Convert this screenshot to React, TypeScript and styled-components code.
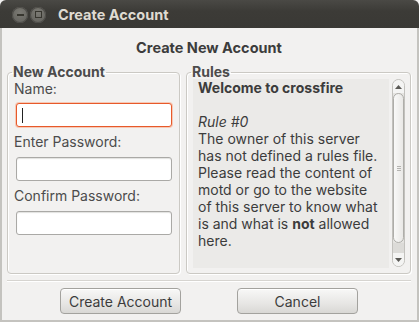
import React from 'react';
import styled, { createGlobalStyle } from 'styled-components';

const FONT = `Inter, 'Open Sans', sans-serif`;

const GlobalStyle = createGlobalStyle`
  html, body {
    margin: 0;
    padding: 0;
    background: #f2f1f0;
  }
  body {
    font-family: ${FONT};
  }
`;

const Window = styled.div`
  width: 419px;
  height: 322px;
  display: flex;
  flex-direction: column;
  box-sizing: border-box;
  background: #f2f1f0;
  overflow: hidden;
`;

const TitleBar = styled.div`
  height: 28px;
  flex-shrink: 0;
  display: flex;
  align-items: center;
  padding-left: 12px;
  gap: 2px;
  background: linear-gradient(#4a4945, #3c3b37 40%, #3a3935);
  border-radius: 6px 6px 0 0;
`;

const TitleButton = styled.div`
  width: 16px;
  height: 16px;
  border-radius: 50%;
  background: radial-gradient(circle at 50% 35%, #7b7a74, #5e5d58);
  box-shadow: inset 0 0 0 1px #4d4c48;
  display: flex;
  align-items: center;
  justify-content: center;
  margin-top: 1px;
`;

const MinusGlyph = styled.div`
  width: 7px;
  height: 2px;
  background: #37362f;
`;

const BoxGlyph = styled.div`
  width: 5px;
  height: 5px;
  border: 1.5px solid #37362f;
`;

const TitleText = styled.div`
  margin-left: 10px;
  color: #dfdbd2;
  font-weight: bold;
  font-size: 14.5px;
`;

const Body = styled.div`
  flex: 1;
  display: flex;
  flex-direction: column;
  border-left: 2px solid #c4c3bf;
  border-right: 2px solid #c4c3bf;
  border-bottom: 2px solid #c4c3bf;
  padding: 0 6px 0 5px;
`;

const Heading = styled.div`
  text-align: center;
  font-weight: bold;
  font-size: 14.5px;
  color: #3c3c3c;
  height: 19px;
  margin-top: 10px;
  line-height: 19px;
`;

const Panels = styled.div`
  display: flex;
  gap: 6px;
  margin-top: 7px;
`;

const Frame = styled.fieldset<{ $width: number }>`
  width: ${p => p.$width}px;
  height: 210px;
  box-sizing: border-box;
  margin: 0;
  border: 1px solid #cbc9c4;
  border-radius: 4px;
  box-shadow: inset 1px 1px 0 #ffffff, 1px 1px 0 #ffffff;
  padding: 0;
`;

const Legend = styled.legend`
  font-weight: bold;
  font-size: 14px;
  color: #4c4c4c;
  padding: 0 1px;
  margin-left: 4px;
  line-height: 16px;
`;

const FormColumn = styled.div`
  display: flex;
  flex-direction: column;
  padding: 0 7px 0 6px;
`;

const FieldLabel = styled.label<{ $first?: boolean }>`
  font-size: 14px;
  color: #4c4c4c;
  line-height: 18px;
  height: 18px;
  margin-top: ${p => (p.$first ? 0 : 6)}px;
`;

const TextInput = styled.div<{ $focused?: boolean }>`
  height: 24px;
  box-sizing: border-box;
  margin: ${p => (p.$focused ? 5 : 6)}px 0 0 2px;
  background: #ffffff;
  border-radius: 3px;
  border: 1px solid ${p => (p.$focused ? '#e7592a' : '#aaa9a6')};
  box-shadow: ${p => (p.$focused ? '0 0 0 1px #f6c9b6' : 'inset 0 1px 1px #e2e1df')};
  display: flex;
  align-items: center;
  padding-left: 5px;
`;

const Caret = styled.div`
  width: 1px;
  height: 15px;
  background: #222;
`;

const RulesInner = styled.div`
  display: flex;
  gap: 3px;
  padding: 0 5px 0 6px;
  margin-top: -1px;
  height: 193px;
`;

const RulesText = styled.div`
  width: 196px;
  height: 189px;
  background: #ebeae8;
  box-sizing: border-box;
  padding: 0 4px 0 5px;
  font-size: 14px;
  line-height: 17px;
  color: #3c3c3c;
`;

const RulesLine = styled.div`
  white-space: nowrap;
`;

const Scrollbar = styled.div`
  width: 13px;
  height: 188px;
  box-sizing: border-box;
  border: 1px solid #c2c1bd;
  border-radius: 7px;
  background: #e4e3e0;
  display: flex;
  flex-direction: column;
  align-items: center;
  overflow: hidden;
`;

const Stepper = styled.div`
  height: 13px;
  flex-shrink: 0;
  display: flex;
  align-items: center;
  justify-content: center;
  background: #f4f4f3;
  width: 100%;
`;

const Thumb = styled.div`
  width: 11px;
  height: 150px;
  box-sizing: border-box;
  border: 1px solid #aeada9;
  border-radius: 6px;
  background: linear-gradient(90deg, #f9f9f8, #e9e8e6);
  display: flex;
  align-items: center;
  justify-content: center;
`;

const Grip = styled.div`
  width: 4px;
  height: 5px;
  border-top: 1px solid #b4b3b0;
  border-bottom: 1px solid #b4b3b0;
  box-sizing: border-box;
  position: relative;
  &::after {
    content: '';
    position: absolute;
    left: 0;
    right: 0;
    top: 1px;
    height: 1px;
    background: #b4b3b0;
  }
`;

const Trough = styled.div`
  flex: 1;
  width: 100%;
  background: #dcdbd8;
`;

const Separator = styled.div`
  height: 0;
  margin-top: 6px;
  border-top: 1px solid #d6d4d0;
  border-bottom: 1px solid #ffffff;
`;

const ButtonRow = styled.div`
  display: flex;
  justify-content: center;
  gap: 56px;
  margin-top: 6px;
`;

const Button = styled.button`
  width: 121px;
  height: 26px;
  box-sizing: border-box;
  border: 1px solid #a3a29e;
  border-radius: 4px;
  background: linear-gradient(#f8f8f7, #e7e6e4 60%, #d9d8d5);
  box-shadow: inset 0 1px 0 #ffffff;
  font-family: ${FONT};
  font-size: 14px;
  color: #3c3c3c;
  padding: 0;
`;

const Arrow = ({ up }: { up?: boolean }) => (
  <svg width="7" height="4" viewBox="0 0 7 4">
    <path d={up ? 'M0 4 L3.5 0 L7 4 Z' : 'M0 0 L3.5 4 L7 0 Z'} fill="#5a5955" />
  </svg>
);

const rules = [
  'The owner of this server',
  'has not defined a rules file.',
  'Please read the content of',
  'motd or go to the website',
  'of this server to know what',
];

export default function App() {
  return (
    <>
      <GlobalStyle />
      <Window>
        <TitleBar>
          <TitleButton>
            <MinusGlyph />
          </TitleButton>
          <TitleButton>
            <BoxGlyph />
          </TitleButton>
          <TitleText>Create Account</TitleText>
        </TitleBar>
        <Body>
          <Heading>Create New Account</Heading>
          <Panels>
            <Frame $width={174}>
              <Legend>New Account</Legend>
              <FormColumn>
                <FieldLabel $first>Name:</FieldLabel>
                <TextInput $focused>
                  <Caret />
                </TextInput>
                <FieldLabel>Enter Password:</FieldLabel>
                <TextInput />
                <FieldLabel>Confirm Password:</FieldLabel>
                <TextInput />
              </FormColumn>
            </Frame>
            <Frame $width={226}>
              <Legend>Rules</Legend>
              <RulesInner>
                <RulesText>
                  <RulesLine>
                    <b>Welcome to crossfire</b>
                  </RulesLine>
                  <RulesLine>&nbsp;</RulesLine>
                  <RulesLine>
                    <i>Rule #0</i>
                  </RulesLine>
                  {rules.map(line => (
                    <RulesLine key={line}>{line}</RulesLine>
                  ))}
                  <RulesLine>
                    is and what is <b>not</b> allowed
                  </RulesLine>
                  <RulesLine>here.</RulesLine>
                </RulesText>
                <Scrollbar>
                  <Stepper>
                    <Arrow up />
                  </Stepper>
                  <Thumb>
                    <Grip />
                  </Thumb>
                  <Trough />
                  <Stepper>
                    <Arrow />
                  </Stepper>
                </Scrollbar>
              </RulesInner>
            </Frame>
          </Panels>
          <Separator />
          <ButtonRow>
            <Button>Create Account</Button>
            <Button>Cancel</Button>
          </ButtonRow>
        </Body>
      </Window>
    </>
  );
}
